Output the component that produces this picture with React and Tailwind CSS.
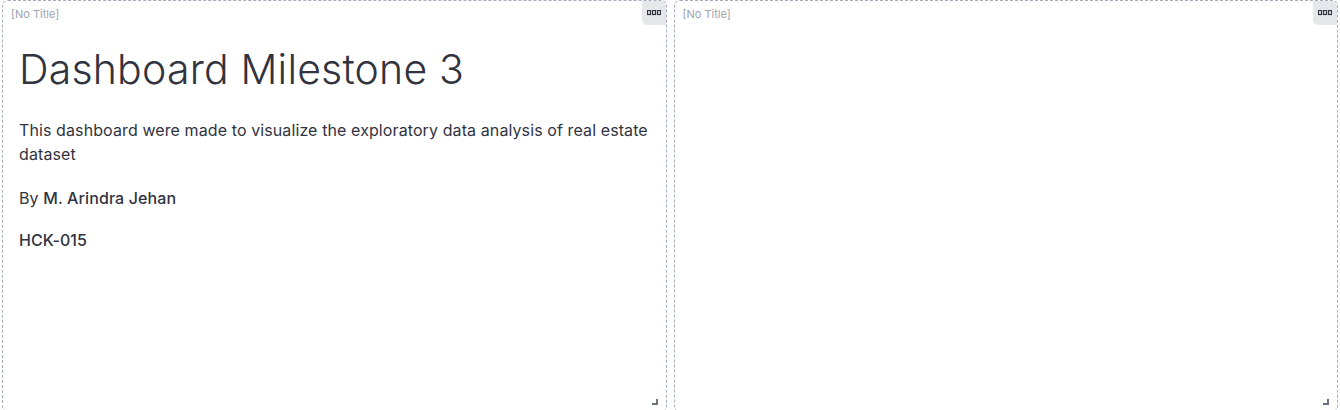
import React from 'react';

const MenuButton = () => (
    <button className="absolute top-0 right-0 h-[24px] w-[24px] flex items-center justify-center bg-[#e5e7eb] rounded-bl-[5px] rounded-tr-[5px]">
        <svg width="14" height="6" viewBox="0 0 14 6">
            <rect x="0.5" y="0.5" width="3" height="4" fill="none" stroke="#31333f" strokeWidth="1.2" />
            <rect x="5.5" y="0.5" width="3" height="4" fill="none" stroke="#31333f" strokeWidth="1.2" />
            <rect x="10.5" y="0.5" width="3" height="4" fill="none" stroke="#31333f" strokeWidth="1.2" />
        </svg>
    </button>
);

const ResizeHandle = () => (
    <svg className="absolute bottom-[6px] right-[8px]" width="6" height="6" viewBox="0 0 6 6">
        <path d="M0 5 H5 V0" fill="none" stroke="#6b7280" strokeWidth="2" />
    </svg>
);

const Panel = ({ children }) => (
    <div className="relative flex-1 h-[412px] border border-dashed border-[#a3adc2] rounded-[6px] bg-white">
        <div className="px-[8px] pt-[5px] text-[11px] leading-[16px] text-[#9ca3af]">[No Title]</div>
        <MenuButton />
        {children}
        <ResizeHandle />
    </div>
);

const App = () => {
    return (
        <div className="w-[1340px] h-[410px] overflow-hidden bg-white flex gap-[7px] px-[2px]" style={{ fontFamily: 'Inter, "Noto Sans", sans-serif' }}>
            <Panel>
                <div className="px-[16px] pr-[14px] text-[#31333f]">
                    <h1 className="text-[41px] leading-[56px] font-light mt-[19px] mb-[21px] tracking-[0.2px]">Dashboard Milestone 3</h1>
                    <p className="text-[16px] leading-[24px] mb-[20px] tracking-[0.1px]">
                        This dashboard were made to visualize the exploratory data analysis of real estate dataset
                    </p>
                    <p className="text-[16px] leading-[24px] mb-[18px] tracking-[0.1px]">
                        By <span className="font-medium">M. Arindra Jehan</span>
                    </p>
                    <p className="text-[16px] leading-[24px] font-medium tracking-[0.1px]">HCK-015</p>
                </div>
            </Panel>
            <Panel />
        </div>
    );
};

export default App;
